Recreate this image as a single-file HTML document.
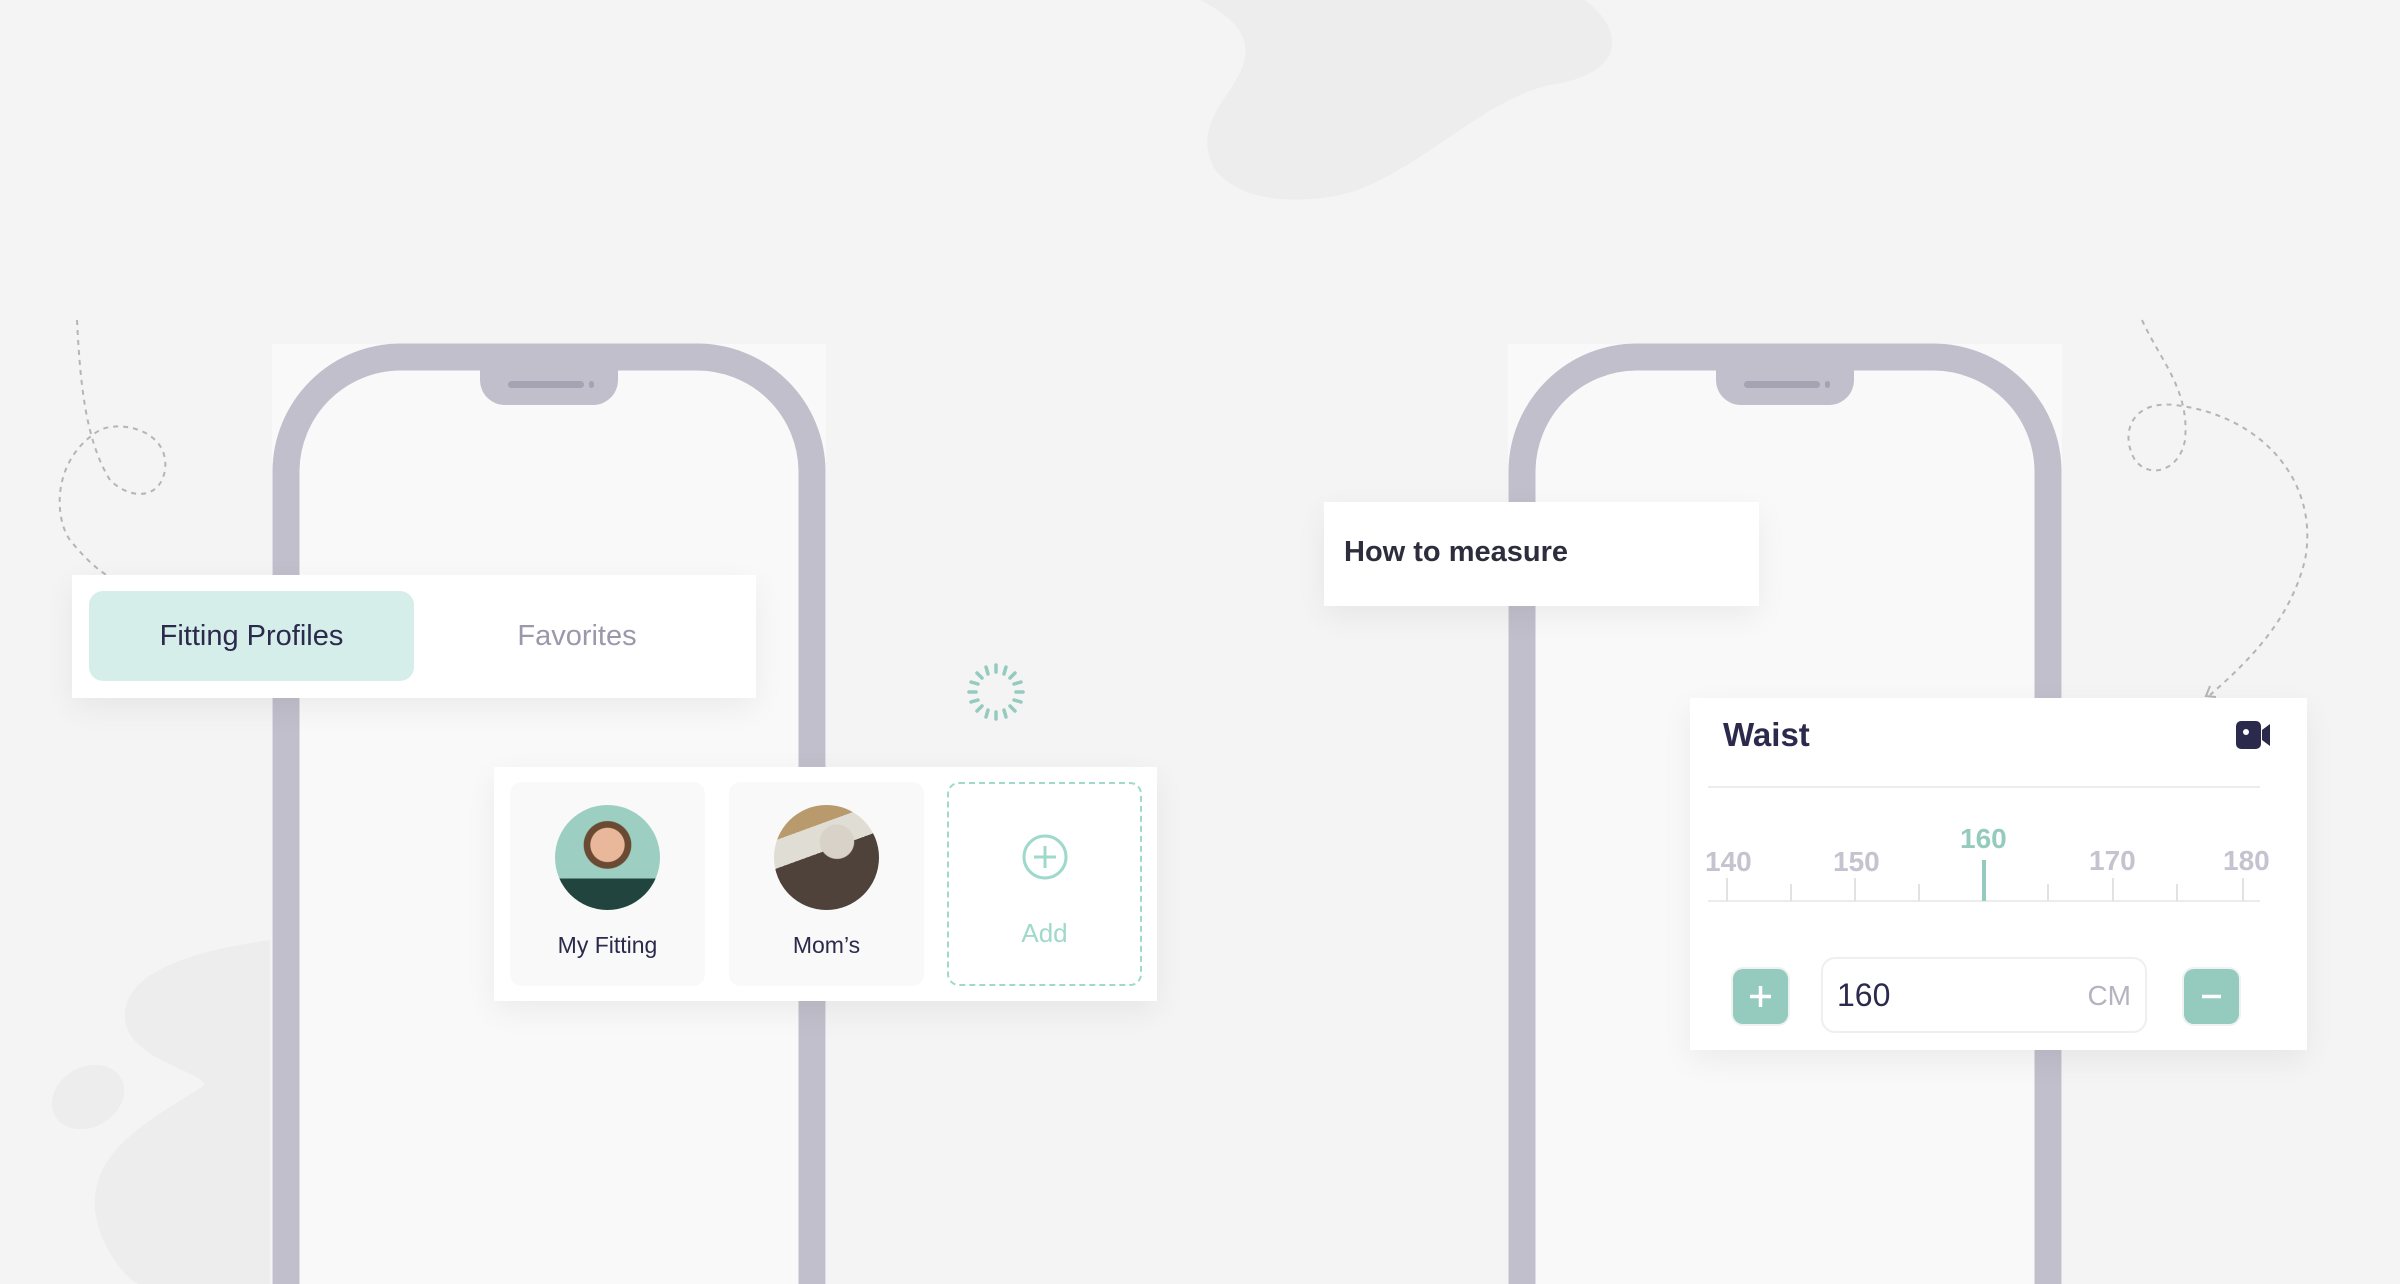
<!DOCTYPE html>
<html><head><meta charset="utf-8"><style>
*{margin:0;padding:0;box-sizing:border-box}
body{width:2400px;height:1284px;background:#f4f4f4;position:relative;overflow:hidden;font-family:"Liberation Sans",sans-serif}
.abs{position:absolute}
.card{position:absolute;background:#fff;box-shadow:0 10px 30px rgba(0,0,0,0.06)}
</style></head><body>
<svg class="abs" style="left:0;top:0" width="2400" height="1284">
<path d="M1200 0 C1260 30 1250 60 1230 90 C1200 130 1205 150 1215 170 C1240 200 1290 205 1340 195 C1410 180 1480 100 1550 85 C1620 75 1630 35 1585 0 Z" fill="#ededed"/>
<path d="M270 940 C200 950 120 970 125 1020 C130 1060 200 1070 205 1085 C150 1120 90 1150 95 1210 C100 1250 130 1284 140 1284 L270 1284 Z" fill="#ededed"/>
<ellipse cx="88" cy="1097" rx="38" ry="30" fill="#ededed" transform="rotate(-30 88 1097)"/>
<!-- phones -->
<rect x="272" y="344" width="554" height="940" fill="#f8f9f8"/>
<rect x="1508" y="344" width="554" height="940" fill="#f8f9f8"/>
<path d="M286 1284 V470 A115 115 0 0 1 400 357 H697 A115 115 0 0 1 812 470 V1284" fill="none" stroke="#c0bfcb" stroke-width="27"/>
<path d="M480 365 H618 V380 A25 25 0 0 1 593 405 H505 A25 25 0 0 1 480 380 Z" fill="#c0bfcb"/>
<rect x="508" y="381" width="76" height="7" rx="3.5" fill="#a4a3b3"/><rect x="589" y="381" width="5" height="7" rx="2.5" fill="#a4a3b3"/>
<path d="M1522 1284 V470 A115 115 0 0 1 1636 357 H1934 A115 115 0 0 1 2048 470 V1284" fill="none" stroke="#c0bfcb" stroke-width="27"/>
<path d="M1716 365 H1854 V380 A25 25 0 0 1 1829 405 H1741 A25 25 0 0 1 1716 380 Z" fill="#c0bfcb"/>
<rect x="1744" y="381" width="76" height="7" rx="3.5" fill="#a4a3b3"/><rect x="1825" y="381" width="5" height="7" rx="2.5" fill="#a4a3b3"/>
<!-- dashed lines -->
<g fill="none" stroke="#b5b5b5" stroke-width="2" stroke-dasharray="5 5">
<path d="M77 320 C80 380 85 440 110 480 C130 500 160 500 165 470 C170 430 120 420 100 430 C50 460 55 520 70 540 C90 565 105 575 115 580"/>
<path d="M2142 320 C2160 360 2190 390 2185 440 C2180 470 2150 480 2135 460 C2120 435 2130 400 2175 405 C2260 415 2320 480 2305 560 C2290 620 2250 660 2210 695"/>
</g>
<path d="M2210 686 L2206 696 L2216 697" fill="none" stroke="#b5b5b5" stroke-width="2"/>
<!-- spinner -->
<g stroke="#94cbbe" stroke-width="3.5" stroke-linecap="round">
<line x1="996" y1="665" x2="996" y2="672"/><line x1="996" y1="712" x2="996" y2="719"/>
<line x1="969" y1="692" x2="976" y2="692"/><line x1="1016" y1="692" x2="1023" y2="692"/>
<line x1="977" y1="673" x2="982" y2="678"/><line x1="1010" y1="706" x2="1015" y2="711"/>
<line x1="1015" y1="673" x2="1010" y2="678"/><line x1="982" y1="706" x2="977" y2="711"/>
<line x1="986" y1="667" x2="988" y2="674"/><line x1="1004" y1="710" x2="1006" y2="717"/>
<line x1="1006" y1="667" x2="1004" y2="674"/><line x1="988" y1="710" x2="986" y2="717"/>
<line x1="971" y1="682" x2="978" y2="684"/><line x1="1014" y1="700" x2="1021" y2="702"/>
<line x1="1021" y1="682" x2="1014" y2="684"/><line x1="978" y1="700" x2="971" y2="702"/>
</g>
</svg>

<!-- tabs -->
<div class="card" style="left:72px;top:575px;width:684px;height:123px">
<div class="abs" style="left:17px;top:16px;width:325px;height:90px;background:#d5eeea;border-radius:14px;color:#2b2a4c;font-size:29px;text-align:center;line-height:90px">Fitting Profiles</div>
<div class="abs" style="left:380px;top:16px;width:250px;height:90px;color:#9a98ab;font-size:29px;text-align:center;line-height:90px">Favorites</div>
</div>

<!-- profiles -->
<div class="card" style="left:494px;top:767px;width:663px;height:234px">
<div class="abs" style="left:16px;top:15px;width:195px;height:204px;background:#f8f9f8;border-radius:12px">
 <div class="abs" style="left:45px;top:23px;width:105px;height:105px;border-radius:50%;background:radial-gradient(circle at 50% 38%,#e9b89a 0 20%,#6b4a33 21% 28%,transparent 29%),linear-gradient(180deg,#9ccfc2 0 70%,#22443f 70%)"></div>
 <div class="abs" style="left:0;top:150px;width:195px;text-align:center;font-size:23px;color:#2b2a4c">My Fitting</div>
</div>
<div class="abs" style="left:235px;top:15px;width:195px;height:204px;background:#f8f9f8;border-radius:12px">
 <div class="abs" style="left:45px;top:23px;width:105px;height:105px;border-radius:50%;background:radial-gradient(circle at 60% 35%,#d8d2c8 0 18%,transparent 19%),linear-gradient(160deg,#b99a6c 0 25%,#e0ddd4 25% 45%,#4e423a 45%)"></div>
 <div class="abs" style="left:0;top:150px;width:195px;text-align:center;font-size:23px;color:#2b2a4c">Mom’s</div>
</div>
<div class="abs" style="left:453px;top:15px;width:195px;height:204px;border:2px dashed #9fd9cb;border-radius:12px">
 <svg class="abs" style="left:72px;top:49px" width="48" height="48"><circle cx="24" cy="24" r="21" fill="none" stroke="#9fd9cb" stroke-width="3"/><path d="M24 13V35M13 24H35" stroke="#9fd9cb" stroke-width="3"/></svg>
 <div class="abs" style="left:0;top:134px;width:191px;text-align:center;font-size:26px;color:#9fd9cb">Add</div>
</div>
</div>

<!-- how to measure -->
<div class="card" style="left:1324px;top:502px;width:435px;height:104px">
<div class="abs" style="left:20px;top:34px;font-size:29px;font-weight:bold;color:#2e2d3d">How to measure</div>
</div>

<!-- waist -->
<div class="card" style="left:1690px;top:698px;width:617px;height:352px">
<div class="abs" style="left:33px;top:18px;font-size:33px;font-weight:bold;color:#2b2a4c">Waist</div>
<svg class="abs" style="left:546px;top:22px" width="36" height="30"><rect x="0" y="1" width="25" height="28" rx="5" fill="#2b2a4c"/><path d="M26 10 L34 4 V26 L26 20Z" fill="#2b2a4c"/><circle cx="10" cy="12" r="3" fill="#fff"/></svg>
<div class="abs" style="left:18px;top:88px;width:552px;height:2px;background:#ececec"></div>
<div class="abs" style="left:15px;top:148px;font-size:28px;font-weight:bold;color:#c4c3cf">140</div>
<div class="abs" style="left:143px;top:148px;font-size:28px;font-weight:bold;color:#c4c3cf">150</div>
<div class="abs" style="left:270px;top:125px;font-size:28px;font-weight:bold;color:#94cbbe">160</div>
<div class="abs" style="left:399px;top:147px;font-size:28px;font-weight:bold;color:#c4c3cf">170</div>
<div class="abs" style="left:533px;top:147px;font-size:28px;font-weight:bold;color:#c4c3cf">180</div>
<svg class="abs" style="left:0;top:150px" width="617" height="60">
<line x1="18" y1="53" x2="570" y2="53" stroke="#ececec" stroke-width="2"/>
<g stroke="#e2e2e2" stroke-width="2"><line x1="37" y1="30" x2="37" y2="53"/><line x1="101" y1="36" x2="101" y2="53"/><line x1="165" y1="30" x2="165" y2="53"/><line x1="229" y1="36" x2="229" y2="53"/><line x1="358" y1="36" x2="358" y2="53"/><line x1="423" y1="30" x2="423" y2="53"/><line x1="487" y1="36" x2="487" y2="53"/><line x1="553" y1="30" x2="553" y2="53"/></g>
<line x1="294" y1="12" x2="294" y2="53" stroke="#94cbbe" stroke-width="4"/>
</svg>
<div class="abs" style="left:43px;top:271px;width:55px;height:55px;background:#94cbbe;border-radius:10px;box-shadow:0 0 0 2px #eef2f1"><svg width="55" height="55"><path d="M27.5 17V38M17 27.5H38" stroke="#fff" stroke-width="3.5"/></svg></div>
<div class="abs" style="left:131px;top:259px;width:326px;height:76px;border:2px solid #efefef;border-radius:14px">
<div class="abs" style="left:14px;top:18px;font-size:32px;color:#2b2a4c">160</div>
<div class="abs" style="right:14px;top:21px;font-size:28px;color:#b4b3c1">CM</div>
</div>
<div class="abs" style="left:494px;top:271px;width:55px;height:55px;background:#94cbbe;border-radius:10px;box-shadow:0 0 0 2px #eef2f1"><svg width="55" height="55"><path d="M18 27.5H37" stroke="#fff" stroke-width="3.5"/></svg></div>
</div>
</body></html>
